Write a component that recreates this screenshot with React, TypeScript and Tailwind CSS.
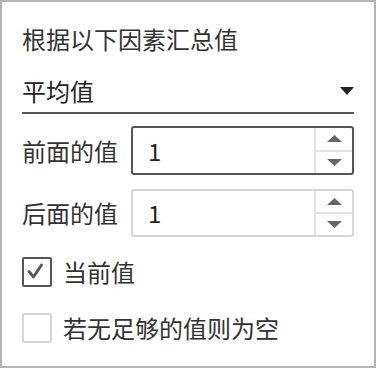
import React, { useState } from 'react';

const font = { fontFamily: '"Noto Sans CJK SC", "Noto Sans", sans-serif' };

const Spinner = () => (
  <div className="flex flex-col w-[38px] h-full border-l-2 border-[#e3e3e3]">
    <div className="flex-1 flex items-center justify-center border-b-2 border-[#e3e3e3]">
      <svg width="15" height="7" viewBox="0 0 15 7">
        <polygon points="0,7 7.5,0 15,7" fill="#666" />
      </svg>
    </div>
    <div className="flex-1 flex items-center justify-center">
      <svg width="15" height="7" viewBox="0 0 15 7">
        <polygon points="0,0 15,0 7.5,7" fill="#666" />
      </svg>
    </div>
  </div>
);

const NumberRow = ({ label, focused, className }: { label: string; focused?: boolean; className: string }) => (
  <div className={`flex items-center ${className}`}>
    <div className="w-[109px] text-[24px] leading-[32px] text-[#333]">{label}</div>
    <div
      className={`flex-1 h-full flex items-stretch rounded-[3px] border-2 ${
        focused ? 'border-[#555]' : 'border-[#d6d6d6]'
      }`}
    >
      <div className="flex-1 flex items-center pl-[15px] text-[24px] text-[#222]">1</div>
      <Spinner />
    </div>
  </div>
);

const CheckRow = ({ label, checked, className }: { label: string; checked: boolean; className: string }) => (
  <div className={`flex items-center ${className}`}>
    <div
      className={`w-[30px] h-[30px] rounded-[2px] border-2 flex items-center justify-center ${
        checked ? 'border-[#555]' : 'border-[#d6d6d6]'
      }`}
    >
      {checked && (
        <svg width="20" height="20" viewBox="0 0 20 20">
          <polyline points="2,9.5 6.5,15 14.5,3" fill="none" stroke="#555" strokeWidth="2.8" strokeLinecap="round" strokeLinejoin="round" />
        </svg>
      )}
    </div>
    <span className="ml-[11px] text-[24px] leading-[32px] text-[#333]">{label}</span>
  </div>
);

export default function App() {
  const [mode] = useState('平均值');

  return (
    <div style={font} className="w-[376px] h-[368px] bg-white border-2 border-[#b3b3b3] px-[20px] flex flex-col">
      <div className="mt-[21px] text-[24px] leading-[32px] text-[#333]">根据以下因素汇总值</div>

      <div className="mt-[20px] flex items-center justify-between pb-[5px] border-b-2 border-[#555]">
        <span className="text-[24px] leading-[32px] text-[#222]">{mode}</span>
        <svg width="14" height="8" viewBox="0 0 14 8">
          <polygon points="0,0 14,0 7,8" fill="#222" />
        </svg>
      </div>

      <NumberRow label="前面的值" focused className="mt-[12px] h-[49px]" />
      <NumberRow label="后面的值" className="mt-[14px] h-[48px]" />

      <CheckRow label="当前值" checked className="mt-[19px]" />
      <CheckRow label="若无足够的值则为空" checked={false} className="mt-[24px]" />
    </div>
  );
}
